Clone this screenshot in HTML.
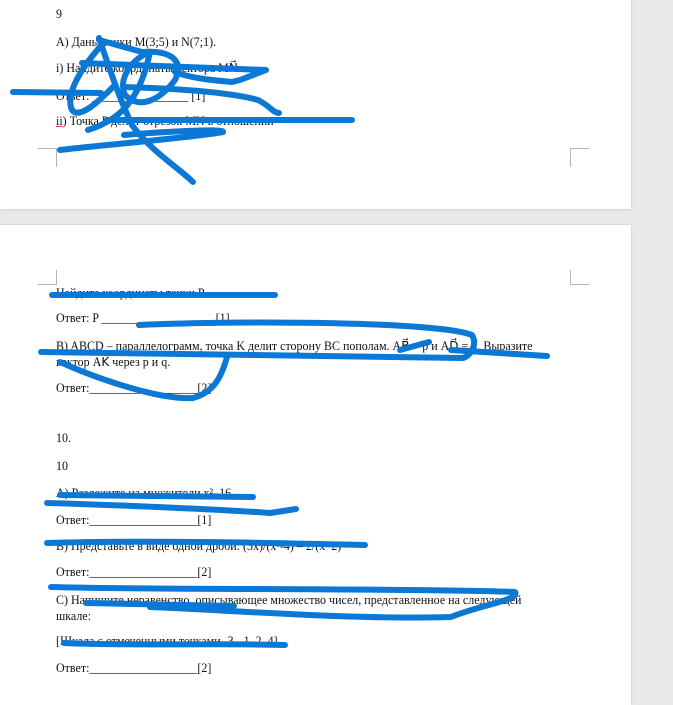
<!DOCTYPE html>
<html><head><meta charset="utf-8"><style>
body{margin:0;width:673px;height:693px;background:#e9e9e9;position:relative;overflow:hidden;font-family:"Liberation Serif","DejaVu Serif",serif;}
.pg{position:absolute;left:0;width:631px;background:#fff;box-shadow:0 0 2px #bbb;}
.t{position:absolute;left:56px;font-size:12.5px;color:#111;white-space:nowrap;transform:scaleX(0.96);transform-origin:0 0;line-height:14px;}
svg{position:absolute;left:0;top:0}
</style></head><body>
<div class="pg" style="top:-2px;height:211px"></div>
<div class="pg" style="top:225px;height:480px"></div>
<div class="t" style="top:7px">9</div>
<div class="t" style="top:35px">А) Даны точки M(3;5) и N(7;1).</div>
<div class="t" style="top:61px">i) Найдите координаты вектора MN⃗</div>
<div class="t" style="top:89px">Ответ: ________________ [1]</div>
<div class="t" style="top:114px"><u style="text-decoration-color:#e04060">ii</u>) Точка P делит отрезок MN в отношении</div>
<div class="t" style="top:286px">Найдите координаты точки P</div>
<div class="t" style="top:311px">Ответ: P ___________________[1]</div>
<div class="t" style="top:339px">B) ABCD – параллелограмм, точка K делит сторону BC пополам. AB⃗ = p и AD⃗ = q. Выразите</div>
<div class="t" style="top:355px">вектор AK⃗ через p и q.</div>
<div class="t" style="top:381px">Ответ:__________________[2]</div>
<div class="t" style="top:431px">10.</div>
<div class="t" style="top:459px">10</div>
<div class="t" style="top:486px">А) Разложите на множители x²–16</div>
<div class="t" style="top:513px">Ответ:__________________[1]</div>
<div class="t" style="top:539px">B) Представьте в виде одной дроби: (3x)/(x²-4) – 2/(x–2)</div>
<div class="t" style="top:565px">Ответ:__________________[2]</div>
<div class="t" style="top:593px">C) Напишите неравенство, описывающее множество чисел, представленное на следующей</div>
<div class="t" style="top:609px">шкале:</div>
<div class="t" style="top:634px">[Шкала с отмеченными точками -3, -1, 2, 4]</div>
<div class="t" style="top:661px">Ответ:__________________[2]</div>
<svg width="673" height="693" viewBox="0 0 673 693">
<g stroke="#b5b5b5" stroke-width="1" fill="none">
<path d="M38 148.5H56.5V167"/><path d="M590 148.5H570.5V167"/>
<path d="M38 284.5H56.5V270"/><path d="M590 284.5H570.5V270"/>
</g>
<g stroke="#0a78d4" stroke-width="6" fill="none" stroke-linecap="round" stroke-linejoin="round">
<path d="M13 92L101 93"/>
<path d="M99 38C110 70 120 100 132 125C150 150 175 165 193 182"/>
<path d="M99 40L142 52C170 50 185 60 175 80C160 100 140 110 125 95C118 80 130 60 150 52"/>
<path d="M99 48C80 70 65 95 72 110C80 120 100 100 115 85"/>
<path d="M82 63L266 70L240 80L232 82C210 80 190 78 175 72"/>
<path d="M124 87C170 88 230 92 258 100C270 106 272 112 279 113"/>
<path d="M107 120L352 120"/>
<path d="M60 150C100 145 190 138 223 132C225 128 160 132 124 135"/>
<path d="M150 52C140 100 120 120 88 130"/>
<path d="M52 295L275 295"/>
<path d="M139 325C250 320 440 322 472 335C478 345 470 356 463 358C300 356 150 354 41 352"/>
<path d="M451 350L547 356"/>
<path d="M60 362C100 380 160 400 193 398C215 392 222 375 227 357"/>
<path d="M429 342L400 350"/>
<path d="M60 495L253 497"/>
<path d="M47 503C120 505 230 510 270 513L296 509"/>
<path d="M47 543C150 540 280 543 365 545"/>
<path d="M51 587C150 590 400 588 515 592C520 600 480 605 451 617C350 620 230 610 150 607"/>
<path d="M86 603L234 606"/>
<path d="M64 643C130 646 220 643 285 645"/>
</g>
</svg>
</body></html>
